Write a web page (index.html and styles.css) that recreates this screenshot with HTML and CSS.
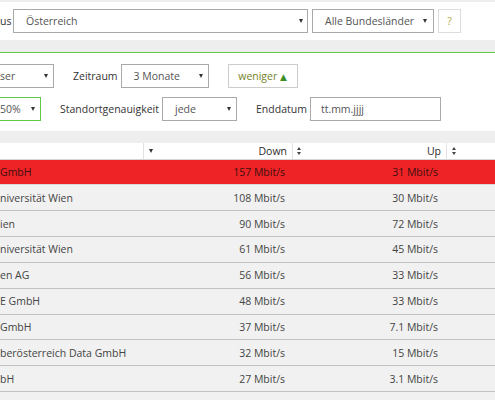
FILE: index.html
```html
<!DOCTYPE html>
<html lang="de">
<head>
<meta charset="utf-8">
<link rel="stylesheet" href="styles.css">
</head>
<body>
<div class="top">
  <span class="cut-label">us</span>
  <div class="sel sel-country"><span>Österreich</span><i class="caret"></i></div>
  <div class="sel sel-state"><span>Alle Bundesländer</span><i class="caret"></i></div>
  <button class="help">?</button>
</div>

<div class="filters">
  <div class="frow">
    <div class="sel sel-cut w-browser"><span>ser</span><i class="caret"></i></div>
    <span class="lbl">Zeitraum</span>
    <div class="sel w-period"><span>3 Monate</span><i class="caret"></i></div>
    <button class="less">weniger <span class="tri">&#9650;</span></button>
  </div>
  <div class="frow">
    <div class="sel sel-cut sel-green w-pct"><span>50%</span><i class="caret"></i></div>
    <span class="lbl">Standortgenauigkeit</span>
    <div class="sel w-acc"><span>jede</span><i class="caret"></i></div>
    <span class="lbl">Enddatum</span>
    <div class="inp"><span>tt.mm.jjjj</span></div>
  </div>
</div>

<div class="table">
  <div class="thead">
    <div class="th th-name"></div>
    <div class="th th-num"><i class="sort-down"></i><span>Down</span></div>
    <div class="th th-num"><i class="sort-both"></i><span>Up</span></div>
    <div class="th th-last"><i class="sort-both"></i></div>
  </div>
  <div class="tr hl"><div class="td">GmbH</div><div class="td num">157 Mbit/s</div><div class="td num up">31 Mbit/s</div><div class="td"></div></div>
  <div class="tr"><div class="td">niversität Wien</div><div class="td num">108 Mbit/s</div><div class="td num up">30 Mbit/s</div><div class="td"></div></div>
  <div class="tr"><div class="td">ien</div><div class="td num">90 Mbit/s</div><div class="td num up">72 Mbit/s</div><div class="td"></div></div>
  <div class="tr"><div class="td">niversität Wien</div><div class="td num">61 Mbit/s</div><div class="td num up">45 Mbit/s</div><div class="td"></div></div>
  <div class="tr"><div class="td">en AG</div><div class="td num">56 Mbit/s</div><div class="td num up">33 Mbit/s</div><div class="td"></div></div>
  <div class="tr"><div class="td">E GmbH</div><div class="td num">48 Mbit/s</div><div class="td num up">33 Mbit/s</div><div class="td"></div></div>
  <div class="tr"><div class="td">GmbH</div><div class="td num">37 Mbit/s</div><div class="td num up">7.1 Mbit/s</div><div class="td"></div></div>
  <div class="tr"><div class="td">berösterreich Data GmbH</div><div class="td num">32 Mbit/s</div><div class="td num up">15 Mbit/s</div><div class="td"></div></div>
  <div class="tr"><div class="td">bH</div><div class="td num">27 Mbit/s</div><div class="td num up">3.1 Mbit/s</div><div class="td"></div></div>
  <div class="tr"><div class="td"></div><div class="td num"></div><div class="td num up"></div><div class="td"></div></div>
</div>
</body>
</html>
```

FILE: styles.css
```css
* { box-sizing: border-box; }
html, body { margin: 0; padding: 0; }
body {
  background: #eeeeee;
  font-family: "Open Sans", "DejaVu Sans", sans-serif;
  font-size: 10.5px;
  color: #333;
  width: 495px;
  height: 400px;
  overflow: hidden;
}

/* top bar */
.top {
  margin-top: 2px;
  height: 38px;
  background: #fff;
  display: flex;
  align-items: center;
}
.cut-label { width: 13px; color: #333; }

.sel {
  height: 24px;
  border: 1px solid #aaa;
  background: #fff;
  display: flex;
  align-items: center;
  justify-content: space-between;
  padding: 0 5px 0 12px;
  color: #555;
  overflow: hidden;
  white-space: nowrap;
}
.caret {
  display: block;
  width: 0; height: 0;
  border-left: 2.5px solid transparent;
  border-right: 2.5px solid transparent;
  border-top: 4px solid #333;
  flex: none;
}
.sel-country { width: 295px; padding-right: 4px; }
.sel-state { width: 122px; margin-left: 4px; padding-right: 6px; }
.help {
  margin-left: 4px;
  width: 23px; height: 24px;
  border: 1px solid #ddd;
  background: #fff;
  color: #b3a63c;
  font: inherit;
  padding: 0;
}

/* filter panel */
.filters {
  margin-top: 12px;
  border-top: 1.5px solid #5fcb45;
  background: #fff;
  padding: 10.5px 0 10px 0;
  display: flex;
  flex-direction: column;
  gap: 8.5px;
}
.frow {
  display: flex;
  align-items: center;
  height: 24.5px;
}
.frow .sel, .frow .inp { height: 100%; }
.sel-cut { border-left: none; padding-left: 0; }
.sel-green { border-color: #5fcb45; }
.w-browser { width: 54px; }
.w-period { width: 88px; }
.w-pct { width: 41px; padding-right: 5px; }
.w-acc { width: 75px; }
.lbl { color: #333; margin-left: 19px; margin-right: 3px; white-space: nowrap; }
.less {
  margin-left: 19px;
  width: 70px;
  height: 24px;
  border: 1px solid #ccc;
  background: #fff;
  color: #74832c;
  font: inherit;
  padding: 0;
  text-align: center;
}
.tri { color: #3b8f26; font-size: 9px; }
.inp {
  width: 131px;
  border: 1px solid #aaa;
  display: flex;
  align-items: center;
  padding-left: 10px;
  color: #555;
}

/* table */
.table { margin-top: 12px; }
.thead, .tr {
  display: grid;
  grid-template-columns: 143px 149px 154px 1fr;
}
.thead {
  height: 17px;
  background: #fff;
  border-bottom: 1px solid #d4d4d4;
}
.th {
  display: flex;
  align-items: center;
  justify-content: space-between;
  border-left: 1px solid #e2e2e2;
  padding: 0 5px 0 4px;
  color: #2b2b2b;
}
.th-name { border-left: none; }
.th-last { justify-content: flex-start; padding-left: 5px; }
.sort-down {
  display: block; width: 0; height: 0;
  border-left: 2.5px solid transparent;
  border-right: 2.5px solid transparent;
  border-top: 4px solid #333;
  margin-left: 1px;
}
.sort-both {
  display: block; width: 5px; height: 8px; position: relative;
}
.sort-both::before, .sort-both::after {
  content: ""; position: absolute; left: 0; width: 0; height: 0;
  border-left: 2.5px solid transparent;
  border-right: 2.5px solid transparent;
}
.sort-both::before { top: 0; border-bottom: 3px solid #444; }
.sort-both::after { bottom: 0; border-top: 3px solid #444; }

.tr {
  height: 25.85px;
  background: #f1f1f1;
  border-bottom: 1.3px solid #c2c2c2;
  color: #444;
}
.tr.hl { background: #ee2326; color: #3a1010; height: 25.3px; border-bottom-color: #d9d9d9; }
.td {
  display: flex;
  align-items: center;
  white-space: nowrap;
  overflow: hidden;
}
.num { justify-content: flex-end; padding-right: 7px; }
.num.up { padding-right: 8px; }
```
